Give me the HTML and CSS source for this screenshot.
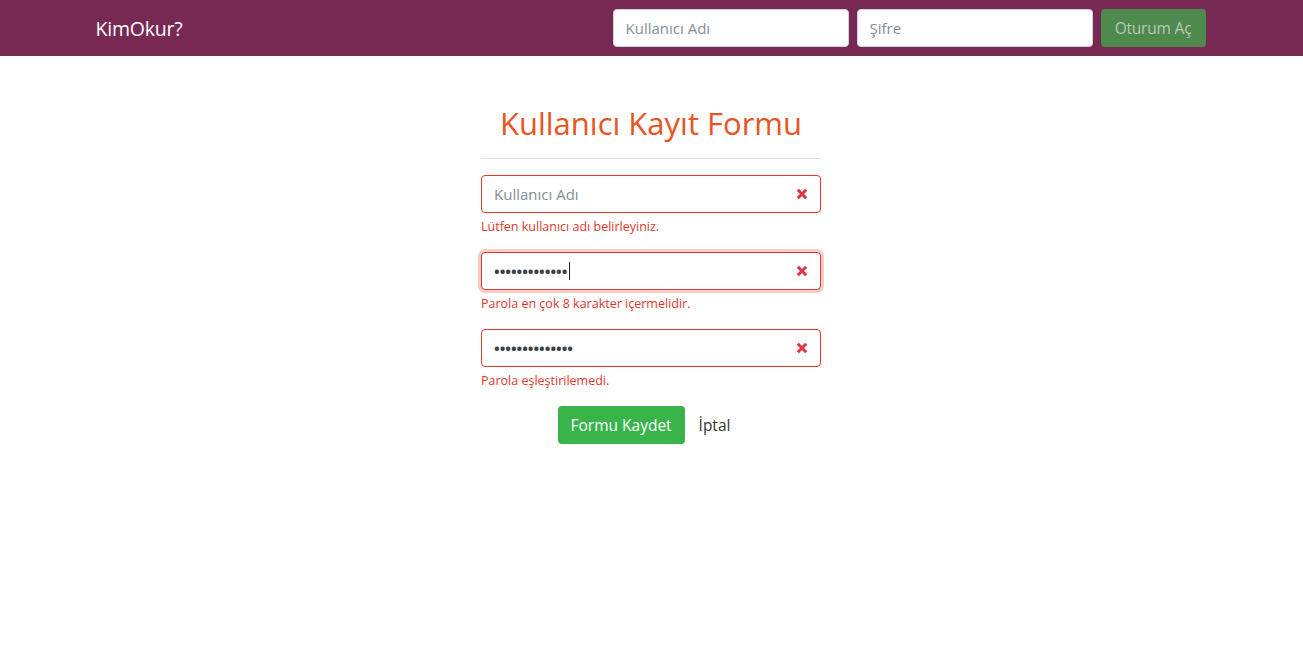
FILE: index.html
```html
<!DOCTYPE html>
<html lang="tr">
<head>
<meta charset="utf-8">
<title>KimOkur?</title>
<link rel="stylesheet" href="styles.css">
</head>
<body>
<nav class="navbar">
  <div class="nav-inner">
    <a class="brand" href="#">KimOkur?</a>
    <form class="login">
      <input class="nav-input" type="text" placeholder="Kullanıcı Adı">
      <input class="nav-input" type="password" placeholder="Şifre">
      <button class="btn-login" type="button">Oturum Aç</button>
    </form>
  </div>
</nav>
<main class="page">
  <form class="reg">
    <h2 class="title">Kullanıcı Kayıt Formu</h2>
    <hr class="rule">
    <div class="group">
      <div class="field">
        <input class="input invalid" type="text" placeholder="Kullanıcı Adı">
        <svg class="xicon" viewBox="0 0 10 10"><path d="M1.5 1.5l7 7M8.5 1.5l-7 7"/></svg>
      </div>
      <div class="feedback">Lütfen kullanıcı adı belirleyiniz.</div>
    </div>
    <div class="group">
      <div class="field">
        <input class="input invalid focused pass" type="password" value="1234567890123">
        <span class="caret"></span>
        <svg class="xicon" viewBox="0 0 10 10"><path d="M1.5 1.5l7 7M8.5 1.5l-7 7"/></svg>
      </div>
      <div class="feedback">Parola en çok 8 karakter içermelidir.</div>
    </div>
    <div class="group">
      <div class="field">
        <input class="input invalid pass" type="password" value="12345678901234">
        <svg class="xicon" viewBox="0 0 10 10"><path d="M1.5 1.5l7 7M8.5 1.5l-7 7"/></svg>
      </div>
      <div class="feedback">Parola eşleştirilemedi.</div>
    </div>
    <div class="actions">
      <button class="btn-save" type="button">Formu Kaydet</button>
      <a class="btn-cancel" href="#">İptal</a>
    </div>
  </form>
</main>
</body>
</html>
```
FILE: styles.css
```css
* { box-sizing: border-box; }
html, body { margin: 0; padding: 0; }
body {
  font-family: "Open Sans", "Noto Sans", sans-serif;
  font-size: 15px;
  color: #333;
  background: #fff;
}
.navbar {
  background: #772953;
  height: 56px;
}
.nav-inner {
  width: 1140px;
  margin: 0 auto;
  padding: 0 16px 0 14px;
  height: 56px;
  display: flex;
  align-items: center;
  justify-content: space-between;
}
.brand {
  color: #fff;
  text-decoration: none;
  font-size: 19.5px;
  letter-spacing: -0.2px;
}
.login {
  display: flex;
  gap: 8px;
}
.nav-input {
  width: 236px;
  height: 38px;
  border: 1px solid #ced4da;
  border-radius: 4px;
  padding: 0 12px;
  font-family: inherit;
  font-size: 15px;
  color: #495057;
  background: #fff;
}
.nav-input::placeholder { color: #868e96; }
.btn-login {
  width: 105px;
  height: 38px;
  border: 0;
  border-radius: 4px;
  background: #4e8a4e;
  color: #bcc8bb;
  font-family: inherit;
  font-size: 15.5px;
  letter-spacing: -0.2px;
  padding: 0;
}
.page {
  display: flex;
  justify-content: center;
  padding-right: 1px;
}
.reg {
  width: 340px;
  padding-top: 48px;
}
.title {
  margin: 0;
  font-weight: 400;
  font-size: 31px;
  line-height: 38px;
  color: #e95420;
  text-align: center;
  letter-spacing: 0;
}
.rule {
  border: 0;
  border-top: 1px solid rgba(0,0,0,0.12);
  margin: 16px 0 16px;
}
.group { margin-bottom: 16px; }
.field { position: relative; }
.input {
  display: block;
  width: 100%;
  height: 38px;
  border: 1px solid #df382c;
  border-radius: 4px;
  padding: 0 40px 0 12px;
  font-family: inherit;
  font-size: 15px;
  color: #495057;
  background: #fff;
  outline: none;
  letter-spacing: 0;
}
.input.pass {
  color: #3a4047;
  font-weight: 700;
  letter-spacing: 0;
}
.input::placeholder { color: #868e96; }
.input.focused { box-shadow: 0 0 0 3px rgba(223,56,44,0.25); }
.caret {
  position: absolute;
  left: 88px;
  top: 10px;
  width: 1px;
  height: 18px;
  background: #222;
}
.xicon {
  position: absolute;
  right: 13px;
  top: 13px;
  width: 12px;
  height: 12px;
  fill: none;
  stroke: #dc3545;
  stroke-width: 2.5;
}
.feedback {
  margin-top: 4px;
  font-size: 12.5px;
  line-height: 19px;
  color: #df382c;
}
.actions {
  display: flex;
  justify-content: center;
  align-items: center;
  gap: 2px;
  padding-right: 2px;
}
.btn-save {
  height: 38px;
  width: 127px;
  border: 0;
  border-radius: 4px;
  background: #38b44a;
  color: #fff;
  font-family: inherit;
  font-size: 15.5px;
  padding: 0;
}
.btn-cancel {
  color: #333;
  text-decoration: none;
  font-size: 15.5px;
  padding: 6px 12px;
}
```
